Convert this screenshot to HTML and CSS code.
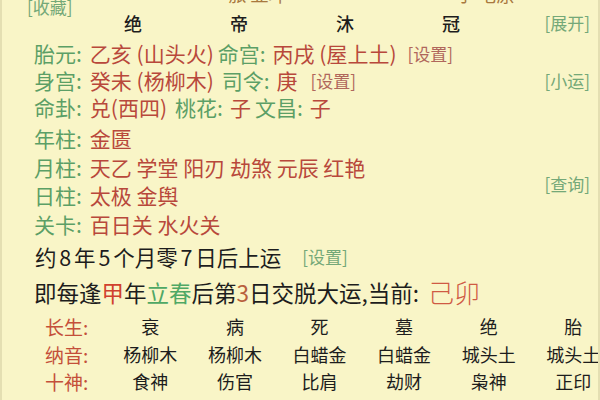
FILE: index.html
```html
<!DOCTYPE html>
<html lang="zh-CN">
<head>
<meta charset="utf-8">
<title>排盘</title>
<link rel="stylesheet" href="styles.css">
</head>
<body>
<div class="panel">
  <div class="top-row">
    <span class="link fav">[收藏]</span>
    <span class="cut cut-a">旅 亚坪</span>
    <span class="cut cut-b">子 宅原</span>
  </div>
  <div class="head-row">
    <span class="hcell">绝</span>
    <span class="hcell">帝</span>
    <span class="hcell">沐</span>
    <span class="hcell">冠</span>
    <span class="link push">[展开]</span>
  </div>

  <div class="info info-a">
    <div class="row">
      <span class="lab">胎元:</span><span class="val">乙亥 (山头火)</span>
      <span class="lab lab2">命宫:</span><span class="val">丙戌 (屋上土)</span>
      <span class="set">[设置]</span>
    </div>
    <div class="row">
      <span class="lab">身宫:</span><span class="val">癸未 (杨柳木)</span>
      <span class="lab lab2 lab3">司令:</span><span class="val">庚</span>
      <span class="set set2">[设置]</span>
      <span class="link push">[小运]</span>
    </div>
    <div class="row">
      <span class="lab">命卦:</span><span class="val">兑(西四)</span>
      <span class="lab lab2 lab3">桃花:</span><span class="val">子</span>
      <span class="lab lab2">文昌:</span><span class="val">子</span>
    </div>
  </div>

  <div class="info-b">
    <div class="info-list">
      <div class="row2"><span class="lab">年柱:</span><span class="val">金匮</span></div>
      <div class="row2"><span class="lab">月柱:</span><span class="val">天乙 学堂 阳刃 劫煞 元辰 红艳</span></div>
      <div class="row2"><span class="lab">日柱:</span><span class="val">太极 金舆</span></div>
      <div class="row2"><span class="lab">关卡:</span><span class="val">百日关 水火关</span></div>
    </div>
    <div class="side">
      <span class="link">[查询]</span>
    </div>
  </div>

  <div class="yun">
    <span class="yun-text">约 8 年 5 个月零 7 日后上运</span>
    <span class="link yun-set">[设置]</span>
  </div>
  <div class="jiao">
    即每逢<span class="red">甲</span>年<span class="green">立春</span>后第<span class="brown">3</span>日交脱大运,当前:<span class="now">己卯</span>
  </div>

  <div class="table">
    <span class="tlab">长生:</span>
    <span>衰</span><span>病</span><span>死</span><span>墓</span><span>绝</span><span>胎</span>
    <span class="tlab">纳音:</span>
    <span>杨柳木</span><span>杨柳木</span><span>白蜡金</span><span>白蜡金</span><span>城头土</span><span>城头土</span>
    <span class="tlab">十神:</span>
    <span>食神</span><span>伤官</span><span>比肩</span><span>劫财</span><span>枭神</span><span>正印</span>
    <span class="tlab">星运:</span>
    <span>沐浴</span><span>冠带</span><span>临官</span><span>帝旺</span><span>衰</span><span>病</span>
  </div>
</div>
</body>
</html>
```

FILE: styles.css
```css
html, body {
  margin: 0;
  padding: 0;
  width: 600px;
  height: 400px;
  overflow: hidden;
  background: #f9f5c7;
}

.panel {
  box-sizing: border-box;
  width: 600px;
  height: 400px;
  border-left: 2px solid #e4dfb2;
  border-right: 2px solid #e4dfb2;
  padding-right: 8px;
  font-family: "Noto Sans CJK SC", "Noto Sans", sans-serif;
  color: #222;
  overflow: hidden;
}

.link {
  color: #74a878;
  font-size: 17px;
  line-height: 20px;
  white-space: nowrap;
}

.push {
  margin-left: auto;
}

/* top clipped row */
.top-row {
  display: flex;
  align-items: flex-start;
  height: 10px;
}
.fav {
  margin-left: 25px;
  margin-top: -3px;
}
.cut {
  color: #a8783e;
  font-size: 18px;
  line-height: 18px;
  margin-top: -15px;
  white-space: nowrap;
}
.cut-a {
  margin-left: 156px;
}
.cut-b {
  margin-left: 170px;
}

/* header */
.head-row {
  display: flex;
  align-items: center;
  height: 26px;
  line-height: 26px;
  padding-left: 78px;
}
.hcell {
  width: 106px;
  text-align: center;
  font-size: 18px;
  font-weight: 500;
  color: #1d1d1d;
}

/* info rows */
.info {
  margin-top: 4px;
  padding-left: 32px;
}
.row {
  display: flex;
  align-items: center;
  height: 27px;
  line-height: 27px;
  font-size: 21px;
  white-space: nowrap;
}
.lab {
  color: #5c9f66;
  margin-right: 8px;
}
.lab2 {
  margin-left: 4px;
  margin-right: 7px;
}
.lab3 {
  margin-left: 8px;
}
.val {
  color: #b8483b;
}
.set {
  color: #b0675c;
  font-size: 17px;
  line-height: 20px;
  margin-left: 11px;
}
.set2 {
  margin-left: 13px;
}

.info-b {
  display: flex;
  margin-top: 3px;
  padding-left: 32px;
}
.info-list {
  flex: 1;
}
.row2 {
  display: flex;
  align-items: center;
  height: 28.5px;
  line-height: 28.5px;
  font-size: 21px;
  white-space: nowrap;
}
.side {
  padding-top: 48px;
}

/* yun lines */
.yun {
  display: flex;
  align-items: center;
  height: 34px;
  line-height: 34px;
  margin-top: 2px;
  padding-left: 33px;
  font-size: 21.5px;
  color: #1d1d1d;
  white-space: nowrap;
}
.yun-text {
  word-spacing: -2px;
}
.yun-set {
  margin-left: 21px;
}
.jiao {
  display: flex;
  align-items: center;
  height: 36px;
  line-height: 36px;
  padding-left: 32px;
  font-size: 22.5px;
  color: #1d1d1d;
  white-space: nowrap;
}
.red { color: #d0412e; }
.green { color: #4fa865; }
.brown { color: #b8603c; }
.now {
  color: #cf5a44;
  font-size: 26px;
  margin-left: 9px;
  font-weight: 300;
}

/* bottom table */
.table {
  display: grid;
  grid-template-columns: 63px repeat(6, 84.6px);
  grid-auto-rows: 27.5px;
  line-height: 27.5px;
  align-items: center;
  margin-top: 3px;
  margin-left: 43px;
  font-size: 18px;
  color: #1d1d1d;
  white-space: nowrap;
}
.table span {
  text-align: center;
}
.table .tlab {
  text-align: left;
  color: #c44f3a;
  font-size: 19px;
}
```
